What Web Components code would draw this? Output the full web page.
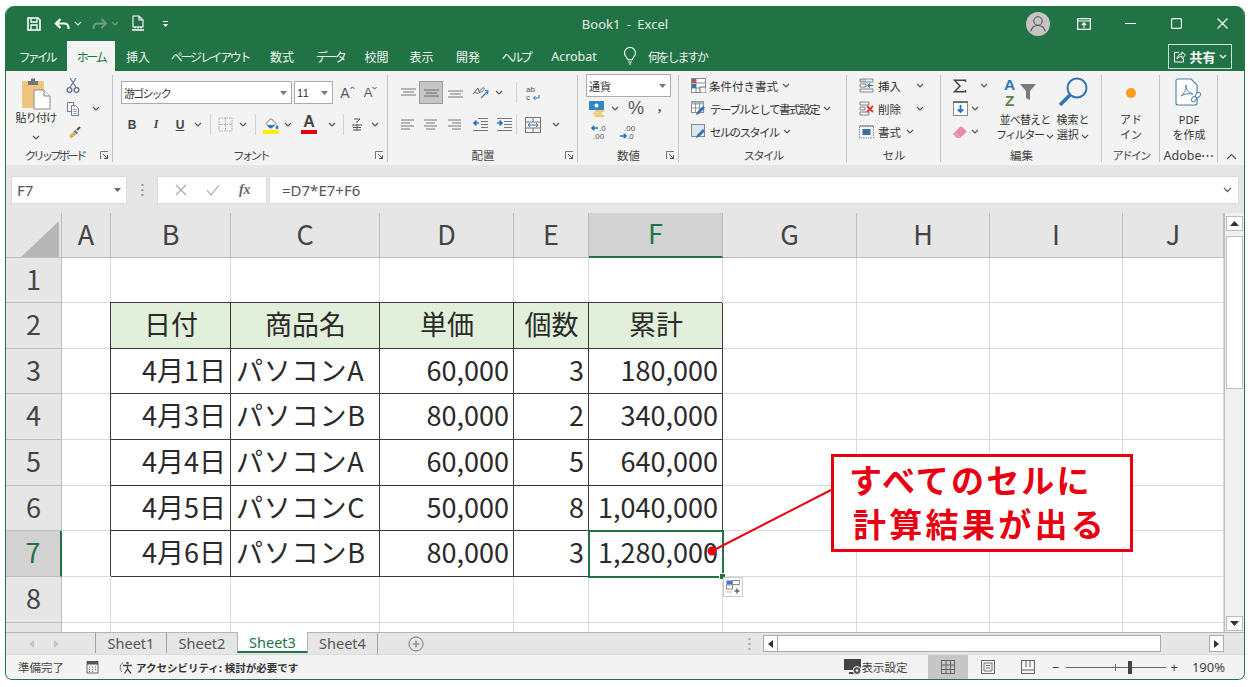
<!DOCTYPE html>
<html lang="ja"><head><meta charset="utf-8"><title>Book1 - Excel</title>
<style>
html,body{margin:0;height:100%;background:#fff;overflow:hidden}
body{padding:6px 6px 7px 5px;box-sizing:border-box;font-family:"Noto Sans","Noto Sans CJK JP",sans-serif}
</style></head><body>
<x-app></x-app>
<script>
const FONT=`"Noto Sans CJK JP","Noto Sans",sans-serif`;
const svg=(w,h,b,extra='')=>`<svg xmlns="http://www.w3.org/2000/svg" width="${w}" height="${h}" viewBox="0 0 ${w} ${h}" fill="none" ${extra}>${b}</svg>`;
const chev=(col='#555')=>svg(8,5,`<path d="M1 1l3 3 3-3" stroke="${col}" stroke-width="1.2"/>`);
const Icons={
 save:svg(16,16,`<path d="M2 2h10l2 2v10H2z" stroke="#fff" stroke-width="1.6"/><path d="M5 2v4h6V2M5 14V9h6v5" stroke="#fff" stroke-width="1.3"/>`),
 undo:svg(17,14,`<path d="M6.5 2 2 6.5 6.5 11" stroke="#fff" stroke-width="2.2"/><path d="M3 6.5h7.5a4 4 0 0 1 4 4v1.5" stroke="#fff" stroke-width="2.2"/>`),
 redo:svg(17,14,`<path d="M10.5 2 15 6.5 10.5 11" stroke="#6f9e84" stroke-width="2"/><path d="M14 6.5H6.5a4 4 0 0 0-4 4V12" stroke="#6f9e84" stroke-width="2"/>`),
 preview:svg(14,17,`<path d="M2 1h6l4 4v7H2zM8 1v4h4" stroke="#fff" stroke-width="1.1"/><path d="M1 15h12" stroke="#fff" stroke-width="1.3"/><circle cx="4" cy="12.5" r="1" fill="#fff"/><circle cx="7" cy="12.5" r="1" fill="#fff"/><circle cx="10" cy="12.5" r="1" fill="#fff"/>`),
 qat:svg(7,8,`<path d="M1 1.5h5" stroke="#fff"/><path d="M1 4l2.5 3L6 4z" fill="#fff"/>`),
 ribbonMode:svg(14,12,`<rect x=".7" y=".7" width="12.6" height="10.6" stroke="#fff" stroke-width="1.2"/><path d="M1 3h12" stroke="#fff"/><path d="M7 10V5M4.8 7 7 4.8 9.2 7" stroke="#fff" stroke-width="1.1"/>`),
 min:svg(11,11,`<path d="M0 5.5h11" stroke="#fff" stroke-width="1.1"/>`),
 max:svg(11,11,`<rect x=".6" y=".6" width="9.8" height="9.8" rx="1.2" stroke="#fff" stroke-width="1.1"/>`),
 close:svg(11,11,`<path d="M.5.5l10 10M10.5.5l-10 10" stroke="#fff" stroke-width="1.1"/>`),
 avatar:svg(24,24,`<circle cx="12" cy="12" r="12" fill="#c4c4c4"/><circle cx="12" cy="9" r="4.2" stroke="#555" stroke-width="1.1"/><path d="M4.8 19.5c.8-3.8 3.6-6 7.2-6s6.4 2.2 7.2 6" stroke="#555" stroke-width="1.1"/>`),
 bulb:svg(14,18,`<path d="M4.8 12.8C4.4 10.6 1.5 9.2 1.5 6a5.5 5.5 0 0 1 11 0c0 3.2-2.9 4.6-3.3 6.8z" stroke="#fff" stroke-width="1.1"/><path d="M5.2 15h3.6M6 17h2" stroke="#fff" stroke-width="1.2"/>`),
 share:svg(13,13,`<path d="M6 2.5H1.5v9.5h9V8.5" stroke="#fff"/><path d="M4 9c.3-3 2.3-5 5-5V1.8l3.4 3.4L9 8.5V6.3C7 6.300 5.200 7.200 4 9z" stroke="#fff"/>`),
 paste:svg(30,33,`<rect x="1" y="4" width="22" height="27" rx="1.500" fill="#edc57f"/><path d="M7 4h3V1.500h4V4h3v4H7z" fill="#757575"/><path d="M13 13h10l6 6v13H13z" fill="#fff" stroke="#8a8a8a"/><path d="M23 13v6h6" stroke="#8a8a8a" fill="#f3f3f3"/>`),
 cut:svg(14,17,`<path d="M4 1l6.500 10M10 1L3.500 11" stroke="#6a7f96" stroke-width="1.300"/><circle cx="3.500" cy="13" r="2.400" stroke="#5d6f85" stroke-width="1.300"/><circle cx="10.500" cy="13" r="2.400" stroke="#5d6f85" stroke-width="1.300"/>`),
 copy:svg(14,15,`<path d="M1.500 1.500h6v9h-6z" stroke="#777" fill="#fff"/><path d="M5.500 4.500h4l3 3v7h-7z" stroke="#6a7f96" fill="#fff"/><path d="M7 8.500h4M7 10.500h4M7 12.500h4" stroke="#8fa3b8"/>`),
 brush:svg(15,15,`<path d="M8 7l-5 5 2 2.500L11 10z" fill="#d8b366"/><path d="M8.500 6.500l3 3" stroke="#777" stroke-width="2"/><path d="M11 6l3-3" stroke="#555" stroke-width="2.200"/>`),
 borders:svg(15,15,`<rect x="1" y="1" width="13" height="13" stroke="#a9a9a9" stroke-dasharray="1.500 1"/><path d="M7.500 1v13M1 7.500h13" stroke="#a9a9a9" stroke-dasharray="1.500 1"/>`),
 fill:svg(16,18,`<path d="M3 7.500l5-5 5 5-4.500 4.500H7z" fill="#fff" stroke="#666"/><path d="M4 9h8l-3.500 3h-2z" fill="#2f75b5"/><path d="M14 9s1.500 1.600 1.500 2.600a1.500 1.500 0 0 1-3 0C12.500 10.600 14 9 14 9z" fill="#2f75b5"/><rect x="0" y="14" width="16" height="4" fill="#ffec00"/>`),
 furi:svg(12,15,`<path d="M3 2h6L6.500 4.500M6 4v2M1 8h10M2 10.500h8M2 13h8M6 7v7" stroke="#555"/>`),
 alTop:svg(17,10,`<path d="M1 1h15M3 4h11M1 7h15" stroke="#777"/>`),
 alMid:svg(17,10,`<path d="M1 2h15M3 5h11M1 8h15" stroke="#666"/>`),
 alBot:svg(17,10,`<path d="M1 3h15M3 6h11M1 9h15" stroke="#777"/>`),
 orient:svg(19,17,`<path d="M2 10l5-6 1.500 5M3.500 8.500l4 1M8.500 7l3-3c1-1 2.500.500 1.500 1.500l-3 3z" stroke="#666"/><path d="M10 14l7-7M14 6.500l3 .500-.500 3" stroke="#2f75b5" stroke-width="1.100"/>`),
 wrap:svg(15,16,`<text x="1" y="7" font-size="8" font-family="Liberation Sans" fill="#555">ab</text><text x="1" y="15" font-size="8" font-family="Liberation Sans" fill="#555">c</text><path d="M14 10v3H8.500M10.500 11 8.500 13l2 2" stroke="#2f75b5"/>`),
 alL:svg(14,11,`<path d="M0 1h13M0 4h9M0 7h13M0 10h9" stroke="#777"/>`),
 alC:svg(14,11,`<path d="M0 1h13M2 4h9M0 7h13M2 10h9" stroke="#777"/>`),
 alR:svg(14,11,`<path d="M0 1h13M4 4h9M0 7h13M4 10h9" stroke="#777"/>`),
 indL:svg(16,15,`<path d="M6 1.500h10M9 4.500h7M9 7.500h7M9 10.500h7M1 13.500h15" stroke="#777"/><path d="M7 6H2M4.500 3.500 2 6l2.500 2.500" stroke="#1f6fbf" stroke-width="1.600"/>`),
 indR:svg(16,15,`<path d="M1 1.500h15M8 4.500h8M8 7.500h8M8 10.500h8M1 13.500h15" stroke="#777"/><path d="M1 6h5M3.500 3.500 6 6 3.500 8.500" stroke="#1f6fbf" stroke-width="1.600"/>`),
 merge:svg(16,16,`<rect x=".5" y=".5" width="15" height="15" stroke="#777"/><path d="M.5 5h15M.5 11h15M8 .5V5M8 11v4.500" stroke="#777"/><path d="M3 8h10M5 6 3 8l2 2M11 6l2 2-2 2" stroke="#2f75b5"/>`),
 currency:svg(18,18,`<rect x="1" y="1" width="15" height="9" fill="#2f86c8"/><circle cx="8.500" cy="5.500" r="2" fill="#fff"/><rect x="7" y="10" width="9" height="2.200" fill="#f2c76e"/><rect x="5" y="12.500" width="9" height="2.200" fill="#f2c76e"/><rect x="7" y="15" width="9" height="2.200" fill="#f2c76e"/>`),
 decUp:svg(20,16,`<path d="M8 4H2M4.300 1.800 2 4l2.300 2.200" stroke="#1f6fbf" stroke-width="1.500"/><text x="9" y="7" font-size="8" font-family="Liberation Sans" fill="#555">.0</text><text x="3" y="15" font-size="8" font-family="Liberation Sans" fill="#555">.00</text>`),
 decDn:svg(20,16,`<text x="6" y="7" font-size="8" font-family="Liberation Sans" fill="#555">.00</text><path d="M2 12h6M5.700 9.800 8 12l-2.300 2.200" stroke="#1f6fbf" stroke-width="1.500"/><text x="9" y="15" font-size="8" font-family="Liberation Sans" fill="#555">.0</text>`),
 cond:svg(15,15,`<rect x=".5" y=".5" width="14" height="14" stroke="#888" fill="#fff"/><path d="M5 .5v14M.5 5h14M.5 10h9" stroke="#888"/><rect x="1" y="1" width="4" height="4" fill="#c0504d"/><rect x="1" y="6" width="4" height="4" fill="#2f75b5"/><rect x="9" y="9" width="6" height="6" fill="#fff" stroke="#666"/>`),
 table:svg(16,15,`<rect x=".5" y=".5" width="12" height="11" stroke="#888" fill="#fff"/><rect x=".5" y=".5" width="12" height="3" fill="#9fb6cd"/><path d="M4.500 .5v11M8.500 .5v11M.5 7h12" stroke="#999"/><path d="M5 14l3-1 6-6-2-2-6 6z" fill="#2f75b5"/>`),
 cellst:svg(16,15,`<rect x=".5" y=".5" width="13" height="12" stroke="#888" fill="#dce6f1"/><path d="M5 14l3-1 6-6-2-2-6 6z" fill="#2f75b5"/>`),
 insert:svg(15,15,`<path d="M1 1h13v3H1zM1 11h13v3H1zM1 6h6v3H1z" stroke="#888"/><path d="M14 7.500H9M11 5.500l-2 2 2 2" stroke="#2f75b5" stroke-width="1.200"/><rect x="1" y="1" width="6" height="3" fill="#2f75b5" opacity=".25"/>`),
 del:svg(16,15,`<path d="M1 1h9v3H1zM1 11h9v3H1zM1 6h5v3H1z" stroke="#888"/><path d="M8 5l6 6M14 5l-6 6" stroke="#e5342b" stroke-width="1.800"/>`),
 format:svg(15,15,`<rect x=".5" y="2" width="14" height="12" stroke="#888" stroke-dasharray="1.500 1"/><path d="M.5 2h14" stroke="#777"/><rect x="3.500" y="5" width="8" height="6" fill="#3e6fa3"/>`),
 sigma:svg(14,14,`<path d="M12.500 3V1.200H1.500L7 7l-5.500 5.800h11V11" stroke="#444" stroke-width="1.500"/>`),
 filldown:svg(15,15,`<rect x=".5" y=".5" width="14" height="14" stroke="#888" fill="#fff"/><path d="M.5 1.200h14" stroke="#666" stroke-width="1.600"/><path d="M7.500 4v7M4.800 8.300 7.500 11l2.700-2.700" stroke="#1f6fbf" stroke-width="1.800"/>`),
 eraser:svg(16,14,`<path d="M1 9l7-7a1.500 1.500 0 0 1 2 0l4 3.500a1.500 1.500 0 0 1 0 2L8 13H5z" fill="#e88ba0"/><path d="M1 9l4 4h3l1-1-4.500-4.500z" fill="#ef9db0"/>`),
 sort:svg(46,36,`<text x="2" y="15" font-size="15.500" font-weight="700" font-family="Liberation Sans" fill="#2f75b5">A</text><text x="3" y="31" font-size="15.500" font-weight="700" font-family="Liberation Sans" fill="#5e7f4e">Z</text><path d="M18 9h16l-6 7v9l-4-2v-7z" fill="#7a7a7a"/>`,''),
 search:svg(30,32,`<circle cx="19" cy="11" r="9.500" stroke="#2f75b5" stroke-width="2"/><path d="M12 18 2 28" stroke="#2f75b5" stroke-width="3.600"/>`),
 dot:svg(12,12,`<circle cx="6" cy="6" r="5" fill="#f99d1c"/>`),
 pdf:svg(28,32,`<path d="M3 2h13l6 6v18a2 2 0 0 1-2 2H3a2 2 0 0 1-2-2V4a2 2 0 0 1 2-2z" fill="#fff" stroke="#4a7fb0" stroke-width="1.100"/><path d="M6 19c3-2 6-7 5-11-1 3 3 8 7 9-4-1-9 0-12 2z" stroke="#4a7fb0"/><rect x="16" y="20" width="6" height="4" rx="2" transform="rotate(-45 19 22)" stroke="#4a7fb0" fill="#fff"/><rect x="20" y="16" width="6" height="4" rx="2" transform="rotate(-45 23 18)" stroke="#4a7fb0" fill="#fff"/>`),
 launcher:svg(9,9,`<path d="M.5 8V.5H8" stroke="#777"/><path d="M3 3l4.500 4.500M7.500 4v3.500H4" stroke="#555"/>`),
 up:svg(11,7,`<path d="M1 6l4.500-4.500L10 6" stroke="#555" stroke-width="1.200"/>`),
 macro:svg(13,14,`<rect x="1" y="2" width="11" height="11" stroke="#666"/><rect x="1" y="1" width="11" height="3.500" fill="#555"/><path d="M3 7h1M6 7h1M9 7h1M3 9.500h1M6 9.500h1M9 9.500h1M3 11.500h1M6 11.500h1" stroke="#666"/>`),
 access:svg(15,15,`<path d="M4 2.500A6 6 0 0 0 3 12" stroke="#777"/><circle cx="8.500" cy="3" r="1.300" fill="#555"/><path d="M4 5.500h9M8.500 5.500V9L5.500 13.500M8.500 9l3.500 4.500" stroke="#444" stroke-width="1.300"/>`),
 display:svg(19,17,`<path d="M0 0h17v11H0z" fill="#444"/><path d="M5 14h6" stroke="#444" stroke-width="2"/><circle cx="13" cy="11.500" r="4" fill="#555" stroke="#f3f3f3"/><circle cx="13" cy="11.500" r="1.300" fill="#f3f3f3"/>`),
 vNormal:svg(14,14,`<rect x=".5" y=".5" width="13" height="13" stroke="#666"/><path d="M5 .5v13M9.500 .5v13M.5 5h13M.5 9.500h13" stroke="#666"/>`),
 vPage:svg(14,14,`<rect x=".5" y=".5" width="13" height="13" stroke="#666"/><path d="M3 3h8v8H3zM5 5.500h4M5 8h4" stroke="#777"/>`),
 vBreak:svg(14,14,`<rect x=".5" y=".5" width="13" height="13" stroke="#666"/><path d="M.5 10h13M5 .5V7M9 .5V7" stroke="#666"/>`),
 plus:svg(16,16,`<circle cx="8" cy="8" r="7" stroke="#777"/><path d="M8 4.500v7M4.500 8h7" stroke="#777" stroke-width="1.200"/>`),
 pasteOpt:svg(15,15,`<rect x=".5" y=".5" width="6" height="4" fill="#3f78d8"/><rect x="6.500" y=".5" width="7" height="4" stroke="#888" fill="#fff"/><rect x=".5" y="5" width="6" height="4" fill="#fff" stroke="#888"/><path d="M.5 12h6" stroke="#888" stroke-dasharray="1 1"/><path d="M11 8.500v5M8.500 11h5" stroke="#666" stroke-width="1.400"/>`),
};
class XIcon extends HTMLElement{constructor(){super();this.attachShadow({mode:'open'})}
 connectedCallback(){this.shadowRoot.innerHTML=`<style>:host{display:inline-flex;align-items:center;justify-content:center;line-height:0}</style>`+(Icons[this.getAttribute('n')]||'')}}
customElements.define('x-icon',XIcon);
const ic=n=>`<x-icon n="${n}"></x-icon>`;
const c=(w,h='')=>`<span class="c" style="width:${w}px">${h}</span>`;
function def(tag,css,html,init){customElements.define(tag,class extends HTMLElement{constructor(){super();this.attachShadow({mode:'open'}).innerHTML=`<style>${css}</style>${typeof html==='function'?html(this):html}`}connectedCallback(){init&&init(this)}})}

def('x-titlebar',`:host{display:flex;align-items:center;height:35px;background:#217346;color:#e4eee8;font:13px ${FONT};position:relative}
.c{display:inline-flex;justify-content:center;align-items:center;flex:none;height:35px}
.t{flex:1;text-align:center;font-family:"Noto Sans",sans-serif;font-size:13px;word-spacing:3px}
.l,.r{display:flex;width:400px;flex:none;align-items:center}.l{padding-left:18px;box-sizing:border-box}.r{justify-content:flex-end}`,
`<div class="l">${c(19,ic('save'))}${c(9)}${c(20,ic('undo'))}${c(12,chev('#d5e5db'))}${c(5)}${c(20,ic('redo'))}${c(12,chev('#6f9e84'))}${c(8)}${c(18,ic('preview'))}${c(14)}${c(9,ic('qat'))}</div>
<div class="t">Book1 - Excel</div>
<div class="r">${c(24,ic('avatar'))}${c(22)}${c(24,ic('ribbonMode'))}${c(22)}${c(24,ic('min'))}${c(22)}${c(24,ic('max'))}${c(22)}${c(24,ic('close'))}${c(10)}</div>`);

def('x-tabs',`:host{display:flex;align-items:stretch;height:30px;background:#217346;color:#edf4f0;font:12px ${FONT}}
.tb{display:flex;justify-content:center;align-items:center;flex:none;white-space:nowrap}
.on{background:#f3f3f3;color:#217346}
.lat{font-family:"Noto Sans",sans-serif;font-size:12.500px}
.sh{margin-left:auto;margin-right:12px;margin-top:3px;height:23px;width:62px;border:1px solid #cfe0d6;display:flex;align-items:center;justify-content:center;gap:3px;font-weight:700;font-size:13px;color:#fff;margin-bottom:1px}`,
[['ファイル',61,'',-3],['ホーム',48,'on',-2.3],['挿入',46],['ページ レイアウト',98,'',-2.2],['数式',46],['データ',50,'',-2.7],['校閲',43],['表示',47],['開発',46],['ヘルプ',50,'',-2.3],['Acrobat',66,'lat']].map(t=>`<div class="tb ${t[2]||''}" style="width:${t[1]}px;letter-spacing:${t[3]||0}px">${t[0]}</div>`).join('')+
`<div class="tb" style="width:41px;padding-left:5px;box-sizing:border-box">${ic('bulb')}</div><div class="tb" style="letter-spacing:-2.200px">何をしますか</div><div class="sh">${ic('share')}<span>共有</span>${chev('#fff')}</div>`);

def('x-group',`:host{display:flex;flex-direction:column;flex:none;height:94px;box-sizing:border-box;position:relative;font:12px ${FONT};color:#333}
.b{flex:1;min-height:0}
.sep{position:absolute;right:0;top:4px;bottom:3px;width:1px;background:#c6c6c6}
.f{height:20px;display:flex;justify-content:center;align-items:center;font-size:11.500px;color:#444;white-space:nowrap}
.lc{position:absolute;right:4px;bottom:5px;line-height:0}`,
h=>`<div class="b"><slot></slot></div><div class="f" style="${h.getAttribute('fs')||''}">${h.getAttribute('label')}</div>${h.hasAttribute('lc')?`<span class="lc">${Icons.launcher}</span>`:''}<div class="sep"></div>`);

const sel=(w,txt,lat,sp=0)=>`<span class="sel" style="width:${w}px"><span style="${lat?'font-family:Liberation Sans;letter-spacing:.5px':`letter-spacing:${sp}px`}">${txt}</span>${svg(7,4,'<path d="M0 0h7L3.500 4z" fill="#777"/>')}</span>`;
def('x-ribbon',`:host{display:flex;height:94px;background:#f3f3f3;position:relative;overflow:hidden}
.row{display:flex;align-items:center;height:23px}
.c{display:inline-flex;justify-content:center;align-items:center;flex:none;height:100%;white-space:nowrap}
.vs{display:inline-block;width:1px;height:21px;background:#d2d2d2}
.sel{display:inline-flex;justify-content:space-between;align-items:center;height:21px;background:#fff;border:1px solid #ababab;padding:0 4px 0 2px;flex:none;font-size:11px;color:#333;box-sizing:content-box}
.big{display:flex;flex-direction:column;align-items:center;flex:none;line-height:15px;font-size:11.500px;color:#333;text-align:center;white-space:nowrap}
.bi{height:36px;display:flex;align-items:center;justify-content:center;margin-top:1px;margin-bottom:1px}
.on{background:#c6c6c6;outline:1px solid #9b9b9b;height:21px;align-self:center}
b,i.t{font-size:12px}
.tx{font-size:11.500px;color:#333;flex:none;white-space:nowrap}
.A{color:#555;position:relative;display:inline-flex;font-family:"Liberation Sans"}
.clip{display:flex}
.stack{display:flex;flex-direction:column}
.srow{display:flex;align-items:center;height:23px}`,
`<x-group label="クリップボード" fs="letter-spacing:-3px;padding-right:10px" lc style="width:107px">
 <div class="clip" style="padding-top:6px">
  <div class="big" style="width:50px;margin-left:5px">${ic('paste')}<span style="font-size:11px;letter-spacing:-.8px">貼り付け</span><span style="margin-top:8px;line-height:5px">${chev()}</span></div>
  <div class="stack" style="margin-left:2px;margin-top:-3px">
   <span class="srow">${c(20,ic('cut'))}</span>
   <span class="srow">${c(20,ic('copy'))}${c(26,chev())}</span>
   <span class="srow">${c(20,ic('brush'))}</span>
  </div>
 </div></x-group>
<x-group label="フォント" fs="letter-spacing:-2.700px" lc style="width:275px">
 <div class="row" style="margin-top:10px;padding-left:8px">${sel(163,'游ゴシック',0,-1.8)}<span style="width:2px"></span>${sel(31,'11',1)}${c(3)}${c(23,`<span class="A" style="font-size:14px">A${svg(5,4,'<path d="M.5 3 2.500.8 4.500 3" stroke="#555"/>','style="margin-top:1px"')}</span>`)}${c(23,`<span class="A" style="font-size:13px">A${svg(5,4,'<path d="M.5 1 2.500 3.200 4.500 1" stroke="#555"/>','style="margin-top:1px"')}</span>`)}</div>
 <div class="row" style="margin-top:9px;padding-left:7px;font-family:Liberation Sans;color:#444">${c(24,'<b>B</b>')}${c(24,'<i class="t" style="font-family:Liberation Serif;font-weight:700">I</i>')}${c(24,'<b style="text-decoration:underline">U</b>')}${c(12,chev())}${c(12,'<span class="vs"></span>')}${c(18,ic('borders'))}${c(18,chev())}${c(6,'<span class="vs"></span>')}${c(26,ic('fill'))}${c(8,chev())}<span class="c" style="width:34px;position:relative"><span style="font:700 16px Liberation Sans;color:#444;margin-top:-5px">A</span><span style="position:absolute;left:9px;bottom:2px;width:16px;height:4px;background:#e60012"></span></span>${c(2)}${c(8,chev())}${c(4)}${c(6,'<span class="vs"></span>')}${c(22,ic('furi'))}${c(14,chev())}</div>
</x-group>
<x-group label="配置" lc style="width:190px">
 <div class="row" style="margin-top:10px;padding-left:8px">${c(24,ic('alTop'))}<span class="c on" style="width:22px">${ic('alMid')}</span>${c(26,ic('alBot'))}${c(24,ic('orient'))}${c(14,chev())}${c(10)}${c(1,'<span class="vs"></span>')}${c(31,ic('wrap'))}</div>
 <div class="row" style="margin-top:9px;padding-left:8px">${c(24,ic('alL'))}${c(22,ic('alC'))}${c(26,ic('alR'))}${c(24,ic('indL'))}${c(24,ic('indR'))}${c(1,'<span class="vs"></span>')}${c(31,ic('merge'))}${c(16,chev())}</div>
</x-group>
<x-group label="数値" lc style="width:101px">
 <div class="row" style="margin-top:3px;padding-left:8px">${sel(77,'通貨')}</div>
 <div class="row" style="padding-left:9px">${c(20,ic('currency'))}${c(16,chev())}${c(26,'<span style="font:18px Liberation Sans;color:#555">%</span>')}${c(21,'<b style="font:700 15px Liberation Serif;color:#555;margin-top:-5px">,</b>')}</div>
 <div class="row" style="padding-left:11px">${c(22,ic('decUp'))}${c(4)}${c(26,ic('decDn'))}</div>
</x-group>
<x-group label="スタイル" fs="letter-spacing:-1.800px" style="width:168px">
 <div style="padding-top:3px">
 <div class="row" style="padding-left:12px;gap:3px">${ic('cond')}<span class="tx">条件付き書式</span>${c(10,chev())}</div>
 <div class="row" style="padding-left:12px;gap:3px">${ic('table')}<span class="tx" style="letter-spacing:-1.500px">テーブルとして書式設定</span>${c(10,chev())}</div>
 <div class="row" style="padding-left:12px;gap:3px">${ic('cellst')}<span class="tx" style="letter-spacing:-1.700px">セルのスタイル</span>${c(10,chev())}</div>
 </div>
</x-group>
<x-group label="セル" style="width:94px">
 <div style="padding-top:3px">
 <div class="row" style="padding-left:11px">${c(17,ic('insert'))}<span class="tx" style="margin-left:3px;width:38px">挿入</span>${c(8,chev())}</div>
 <div class="row" style="padding-left:11px">${c(17,ic('del'))}<span class="tx" style="margin-left:3px;width:38px">削除</span>${c(8,chev())}</div>
 <div class="row" style="padding-left:11px">${c(17,ic('format'))}<span class="tx" style="margin-left:3px;width:28px">書式</span>${c(8,chev())}</div>
 </div>
</x-group>
<x-group label="編集" style="width:161px">
 <div class="clip" style="padding-top:3px">
  <div class="stack" style="margin-left:11px;width:42px">
   <span class="srow">${c(16,ic('sigma'))}${c(12)}${c(8,chev())}</span>
   <span class="srow">${c(16,ic('filldown'))}${c(3)}${c(8,chev())}</span>
   <span class="srow">${c(16,ic('eraser'))}${c(3)}${c(8,chev())}</span>
  </div>
  <div class="big" style="width:62px;font-size:11px">
   <span class="bi">${ic('sort')}</span><span style="letter-spacing:-.8px">並べ替えと</span><span><span style="letter-spacing:-1.400px">フィルター</span> ${chev()}</span></div>
  <div class="big" style="width:34px;font-size:11px">
   <span class="bi">${ic('search')}</span><span>検索と</span><span>選択 ${chev()}</span></div>
 </div>
</x-group>
<x-group label="アドイン" fs="font-size:11px;letter-spacing:-1.800px" style="width:58px">
 <div class="clip" style="padding-top:3px"><div class="big" style="width:58px;font-size:11px"><span class="bi">${ic('dot')}</span><span>アド</span><span>イン</span></div></div>
</x-group>
<x-group label="Adobe⋯" fs="font-size:12.500px;font-family:Noto Sans" style="width:58px">
 <div class="clip" style="padding-top:3px"><div class="big" style="width:58px;font-size:11px"><span class="bi">${ic('pdf')}</span><span style="font-family:Noto Sans">PDF</span><span>を作成</span></div></div>
</x-group>
<div style="flex:1;display:flex;align-items:flex-end;justify-content:center;padding-bottom:5px;line-height:0">${Icons.up}</div>`);

def('x-formula',`:host{display:flex;height:48px;background:#e6e6e6;box-sizing:border-box;padding:11px 5px 9px 5px;align-items:stretch;font:15px "Noto Sans",sans-serif;color:#555}
.b{background:#fff;border:1px solid #dcdcdc;display:flex;align-items:center;box-sizing:border-box}
.n{width:116px;padding:0 5px;justify-content:space-between}
.d{width:30px;display:flex;align-items:center;justify-content:center}
.fx{width:110px;justify-content:space-around;padding:0 6px 0 8px;color:#999}
.i{flex:1;margin-left:2px;padding:0 6px 0 12px;justify-content:space-between}`,
`<div class="b n"><span>F7</span>${svg(7,4,'<path d="M0 0h7L3.500 4z" fill="#666"/>')}</div>
<div class="d">${svg(3,12,'<path d="M1.500 0v2M1.500 5v2M1.500 10v2" stroke="#999" stroke-width="2"/>')}</div>
<div class="b fx">${svg(12,12,'<path d="M1 1l10 10M11 1L1 11" stroke="#aaa" stroke-width="1.200"/>')}${svg(14,12,'<path d="M1 6l4 5L13 1" stroke="#aaa" stroke-width="1.200"/>')}<span style="font:italic 700 14px Liberation Serif;color:#666">fx</span></div>
<div class="b i"><span>=D7*E7+F6</span>${svg(9,6,'<path d="M1 1l3.500 3.500L8 1" stroke="#666" stroke-width="1.300"/>')}</div>`);

const cols=[56,49,120,149,134,75,134,134,133,133,101];
const rowsH=[45,45,46,45,46,46,45,46,46,40];
const data=[
 ['日付','商品名','単価','個数','累計'],
 ['4月1日','パソコンA','60,000','3','180,000'],
 ['4月3日','パソコンB','80,000','2','340,000'],
 ['4月4日','パソコンA','60,000','5','640,000'],
 ['4月5日','パソコンC','50,000','8','1,040,000'],
 ['4月6日','パソコンB','80,000','3','1,280,000']];
function gridHtml(){
 let h='<div class="x corner"><span class="tri"></span></div>';
 'ABCDEFGHIJ'.split('').forEach(l=>h+=`<div class="x ch ${l==='F'?'cs':''}">${l}</div>`);
 for(let r=1;r<=9;r++){
  h+=`<div class="x rh ${r===7?'rs':''}">${r<9?r:''}</div>`;
  for(let k=1;k<=10;k++){
   let cl='g',t='';
   const dr=r-2,dk=k-2;
   if(dr>=0&&dr<6&&dk>=0&&dk<5){
     t=data[dr][dk];
     cl='d'+(dr===0?' hd':(dk===1?' lf':' rt'));
     if(r===7&&k===6)cl+=' act';
   }
   h+=`<div class="${cl}">${t}${r===7&&k===6?'<i class="fh"></i><span class="po">'+Icons.pasteOpt+'</span>':''}</div>`;
  }
 }
 return h;
}
def('x-sheet',`:host{display:flex;height:419px;background:#fff;overflow:hidden;font:27px ${FONT};color:#2a2a2a;position:relative}
.grid{display:grid;flex:none;width:1218px;grid-template-columns:${cols.map(v=>v+'px').join(' ')};grid-template-rows:${rowsH.map(v=>v+'px').join(' ')};overflow:hidden}
.x{background:#e6e6e6;display:flex;align-items:center;justify-content:center;color:#444;box-sizing:border-box;border-right:1px solid #bdbdbd;border-bottom:1px solid #bdbdbd;padding-bottom:4px}
.corner{position:relative;padding:0}
.tri{display:block;width:0;height:0;border-style:solid;border-width:0 0 36px 38px;border-color:transparent transparent #b6b6b6 transparent;margin:7px 2px 0 14px}
.cs{background:#d2d2d2;color:#217346;border-bottom:2px solid #217346}
.rs{background:#d2d2d2;color:#217346;border-right:2px solid #217346}
.g{box-sizing:border-box;border-right:1px solid #dadada;border-bottom:1px solid #dadada}
.d{box-sizing:border-box;border-right:1px solid #3a3a3a;border-bottom:1px solid #3a3a3a;display:flex;align-items:center;padding:0 4px 4px 5px;white-space:nowrap;position:relative;line-height:1;box-shadow:-1px -1px 0 #3a3a3a}
.hd{background:#e2efda;justify-content:center}
.rt{justify-content:flex-end}.lf{justify-content:flex-start;letter-spacing:.8px}
.act{outline:2px solid #217346;outline-offset:-1px;z-index:2}
.fh{position:absolute;right:-3px;bottom:-3px;width:5px;height:5px;background:#217346;border:1px solid #fff;box-sizing:content-box;margin:-1px}
.po{position:absolute;left:calc(100% + 1px);top:calc(100% + 1px);width:20px;height:20px;background:#fbfbfb;border:1px solid #ccc;box-sizing:border-box;display:flex;align-items:center;justify-content:center}
.vb{flex:none;width:20px;background:#f0f0f0;display:flex;flex-direction:column;box-sizing:border-box;border-left:1px solid #bdbdbd;padding:0 1px}
.btn{height:15px;background:#fff;border:1px solid #bdbdbd;display:flex;align-items:center;justify-content:center;box-sizing:border-box;flex:none}
.th{height:153px;background:#fff;border:1px solid #bdbdbd;box-sizing:border-box;margin-top:5px}
.sp{flex:1}
.callout{position:absolute;left:825px;top:241px;width:302px;height:98px;box-sizing:border-box;border:3px solid #e60012;background:#fff;color:#e60012;font:700 33px/44px ${FONT};padding:0 0 0 19px;z-index:4;white-space:nowrap}
.l1{letter-spacing:2.200px;margin-left:-4px}.l2{letter-spacing:3.300px}
.ln{position:absolute;left:695px;top:270px;z-index:4;overflow:visible}`,
`<div class="grid">${gridHtml()}</div>
<div class="vb"><div class="btn" style="margin-top:3px">${svg(9,5,'<path d="M4.500 0 9 5H0z" fill="#333"/>')}</div><div class="th"></div><div class="sp"></div><div class="btn" style="margin-bottom:1px">${svg(9,5,'<path d="M0 0h9L4.500 5z" fill="#333"/>')}</div></div>
<svg class="ln" width="136" height="72" viewBox="0 0 136 72"><path d="M130 7 11 68" stroke="#e60012" stroke-width="2"/><circle cx="11" cy="68" r="4.500" fill="#e60012"/></svg>
<div class="callout"><span class="l1">すべてのセルに</span><br><span class="l2">計算結果が出る</span></div>`);

def('x-sheetbar',`:host{display:flex;align-items:stretch;height:22px;background:#e6e6e6;border-top:1px solid #b4b4b4;box-sizing:border-box;font:14.500px "Noto Sans",sans-serif;color:#555}
.nv{width:89px;flex:none;display:flex;align-items:center;gap:20px;padding-left:23px;box-sizing:border-box}
.s{display:flex;align-items:center;justify-content:center;flex:none;width:71px;height:21px;box-sizing:border-box;border-left:1px solid #a0a0a0;margin-top:-1px}
.on{background:#fff;color:#217346;border:0;border-left:1px solid #b4b4b4;border-right:1px solid #b4b4b4;border-bottom:2px solid #217346}
.e{width:1px;background:#a0a0a0;flex:none;margin:0 30px 0 0}
.pl{display:flex;align-items:center;flex:none}
.sp{flex:1}
.dots{display:flex;align-items:center;width:15px;flex:none}
.hb{display:flex;align-items:center;flex:none;width:461px;height:17px;margin-top:2px}
.btn{width:15px;height:17px;background:#fff;border:1px solid #aaa;box-sizing:border-box;display:flex;align-items:center;justify-content:center;flex:none}
.tk{width:383px;height:17px;background:#fff;border:1px solid #aaa;border-left:0;box-sizing:border-box;flex:none}
.gap{flex:1}.end{width:20px;flex:none}`,
`<div class="nv">${svg(5,8,'<path d="M5 0v8L0 4z" fill="#c4c4c4"/>')}${svg(5,8,'<path d="M0 0v8l5-4z" fill="#c4c4c4"/>')}</div>
<div class="s">Sheet1</div><div class="s">Sheet2</div><div class="s on">Sheet3</div><div class="s" style="border:0;width:69px">Sheet4</div><div class="e"></div>
<div class="pl">${ic('plus')}</div><div class="sp"></div>
<div class="dots">${svg(3,12,'<path d="M1.500 0v2M1.500 5v2M1.500 10v2" stroke="#aaa" stroke-width="2"/>')}</div>
<div class="hb"><div class="btn">${svg(5,8,'<path d="M5 0v8L0 4z" fill="#333"/>')}</div><div class="tk"></div><div class="gap"></div><div class="btn">${svg(5,8,'<path d="M0 0v8l5-4z" fill="#333"/>')}</div></div><div class="end"></div>`);

def('x-status',`:host{display:flex;align-items:center;height:25px;background:#f3f3f3;box-sizing:border-box;border-top:1px solid #dcdcdc;font:11.500px ${FONT};color:#444;padding-left:12px}
.c{display:inline-flex;align-items:center;justify-content:center;flex:none;height:100%}
.vw{display:flex;height:100%;flex:none}
.v{width:40px;display:flex;align-items:center;justify-content:center}
.on{background:#c6c6c6}
.sl{position:relative;width:100px;height:1px;background:#666;flex:none;margin:0 4px}
.tk{position:absolute;left:49px;top:-3px;width:1px;height:7px;background:#666}
.th{position:absolute;left:62px;top:-6px;width:4px;height:13px;background:#444}
.sp{flex:1}`,
`<span style="width:48px;flex:none">準備完了</span>${c(20)}${ic('macro')}${c(20)}${ic('access')}<span style="font-weight:700;margin-left:2px;font-size:10.500px;color:#333;white-space:nowrap">アクセシビリティ: 検討が必要です</span><div class="sp"></div>
${ic('display')}<span style="margin-left:-2px;margin-right:21px;flex:none">表示設定</span>
<div class="vw"><div class="v on">${ic('vNormal')}</div><div class="v">${ic('vPage')}</div><div class="v">${ic('vBreak')}</div></div>
<span class="c" style="width:14px;font-family:Noto Sans;font-size:13px">−</span>
<div class="sl"><i class="tk"></i><i class="th"></i></div><span style="font:13px Noto Sans;flex:none">+</span>
<span style="font:13px Noto Sans;flex:none;margin-left:14px;margin-right:19px">190%</span>`);

def('x-app',`:host{display:flex;flex-direction:column;width:1240px;height:674px;box-sizing:border-box;border:1px solid #217346;border-top:0;border-radius:9px 9px 7px 7px;overflow:hidden;background:#f3f3f3;position:relative}`,
`<x-titlebar></x-titlebar><x-tabs></x-tabs><x-ribbon></x-ribbon><x-formula></x-formula><x-sheet></x-sheet><x-sheetbar></x-sheetbar><x-status></x-status>`);
</script>
</body></html>
